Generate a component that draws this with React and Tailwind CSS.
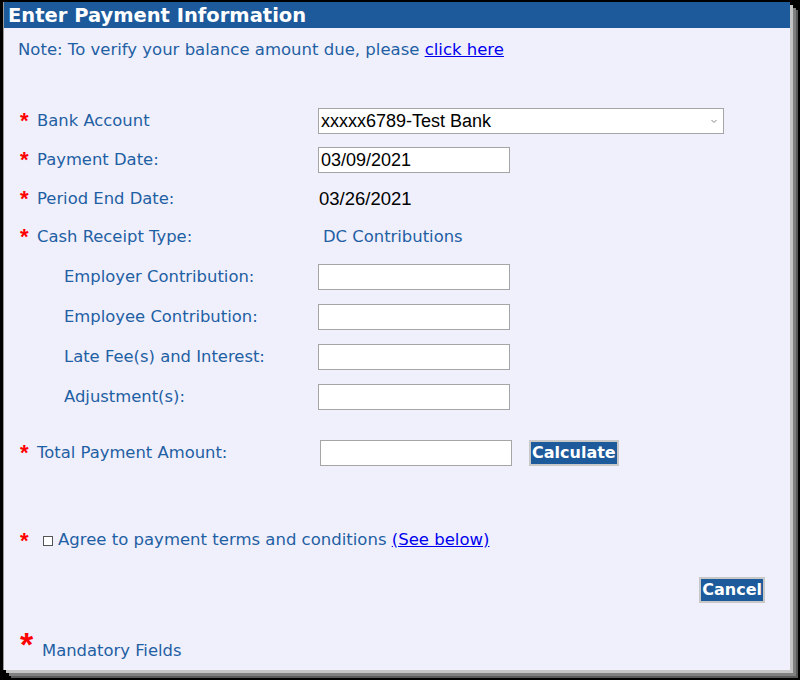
import React from "react";

const F = { fontFamily: '"DejaVu Sans", Verdana, sans-serif' };

function Star({ big }) {
  return (
    <span
      className={
        big
          ? "text-[#ff0000] font-bold text-[34px] leading-none w-[22px] h-[22px] -translate-y-[3px]"
          : "text-[#ff0000] font-bold text-[22px] leading-none w-[17px] h-[13px] -translate-y-[4px]"
      }
      style={{ fontFamily: '"Liberation Sans", Arial, sans-serif' }}
    >
      *
    </span>
  );
}

function Box({ w = "w-[192px]", children, className = "" }) {
  return (
    <div
      className={`${w} h-[26px] bg-white border border-[#a5a5a5] flex items-center px-[2px] text-[18px] text-black ${className}`}
      style={{ fontFamily: '"Liberation Sans", Arial, sans-serif' }}
    >
      {children}
    </div>
  );
}

function Row({ mt, star, label, indent, children }) {
  return (
    <div className={`flex items-center h-[26px] pl-[16px] ${mt}`}>
      <div className="w-[298px] flex items-center">
        {indent ? <span className="w-[44px]" /> : star ? <Star /> : <span className="w-[17px]" />}
        <span className="text-[16.4px] text-[#1f5fa3]">{label}</span>
      </div>
      {children}
    </div>
  );
}

export default function App() {
  return (
    <div className="w-[800px] h-[680px] bg-black pt-[2px] pl-[3px]" style={F}>
      <div className="w-[787px] h-[668px] bg-[#f0f0fc] border-l border-[#9a9a9a] shadow-[3px_3px_0_#c4c4c4,6px_6px_0_#808080,8px_8px_0_#5a5a5a] flex flex-col">
        <div className="h-[26px] bg-[#1d5a9c] text-white font-bold text-[19.5px] leading-[28px] pl-[4px]">
          Enter Payment Information
        </div>
        <div className="mt-[12px] pl-[14px] h-[20px] leading-[20px] text-[16.5px] text-[#1f5fa3]">
          Note: To verify your balance amount due, please{" "}
          <span className="text-[#0000ee] underline">click here</span>
        </div>

        <Row mt="mt-[48px]" star label="Bank Account">
          <Box w="w-[406px]" className="justify-between">
            <span>xxxxx6789-Test Bank</span>
            <svg width="10" height="10" viewBox="0 0 10 10" className="mr-[2px]">
              <path d="M2.5 4 L5 6.5 L7.5 4" fill="none" stroke="#888" strokeWidth="1" />
            </svg>
          </Box>
        </Row>
        <Row mt="mt-[13px]" star label="Payment Date:">
          <Box>03/09/2021</Box>
        </Row>
        <Row mt="mt-[13px]" star label="Period End Date:">
          <span
            className="text-[18.5px] text-black pl-[1px]"
            style={{ fontFamily: '"Liberation Sans", Arial, sans-serif' }}
          >
            03/26/2021
          </span>
        </Row>
        <Row mt="mt-[12px]" star label="Cash Receipt Type:">
          <span className="text-[16.4px] text-[#1f5fa3] pl-[5px]">DC Contributions</span>
        </Row>
        <Row mt="mt-[14px]" indent label="Employer Contribution:">
          <Box />
        </Row>
        <Row mt="mt-[14px]" indent label="Employee Contribution:">
          <Box />
        </Row>
        <Row mt="mt-[14px]" indent label="Late Fee(s) and Interest:">
          <Box />
        </Row>
        <Row mt="mt-[14px]" indent label="Adjustment(s):">
          <Box />
        </Row>
        <Row mt="mt-[30px]" star label="Total Payment Amount:">
          <Box className="ml-[2px]" />
          <button className="ml-[17px] h-[26px] px-[1px] bg-[#1d5a9c] text-white font-bold text-[16px] border-2 border-[#c8c8c8] leading-none">
            Calculate
          </button>
        </Row>

        <div className="flex items-center h-[26px] pl-[16px] mt-[61px]">
          <Star />
          <span className="w-[10px] h-[10px] border border-[#555] bg-white ml-[6px] mt-[1px]" />
          <span className="text-[16.5px] text-[#1f5fa3] ml-[5px]">
            Agree to payment terms and conditions{" "}
            <span className="text-[#0000ee] underline">(See below)</span>
          </span>
        </div>

        <div className="flex justify-end pr-[25px] mt-[24px]">
          <button className="h-[26px] px-[1px] bg-[#1d5a9c] text-white font-bold text-[16px] border-2 border-[#c8c8c8] leading-none">
            Cancel
          </button>
        </div>

        <div className="flex items-start pl-[16px] mt-[27px]">
          <Star big />
          <span className="text-[16.4px] text-[#1f5fa3] mt-[9px]">Mandatory Fields</span>
        </div>
      </div>
    </div>
  );
}
